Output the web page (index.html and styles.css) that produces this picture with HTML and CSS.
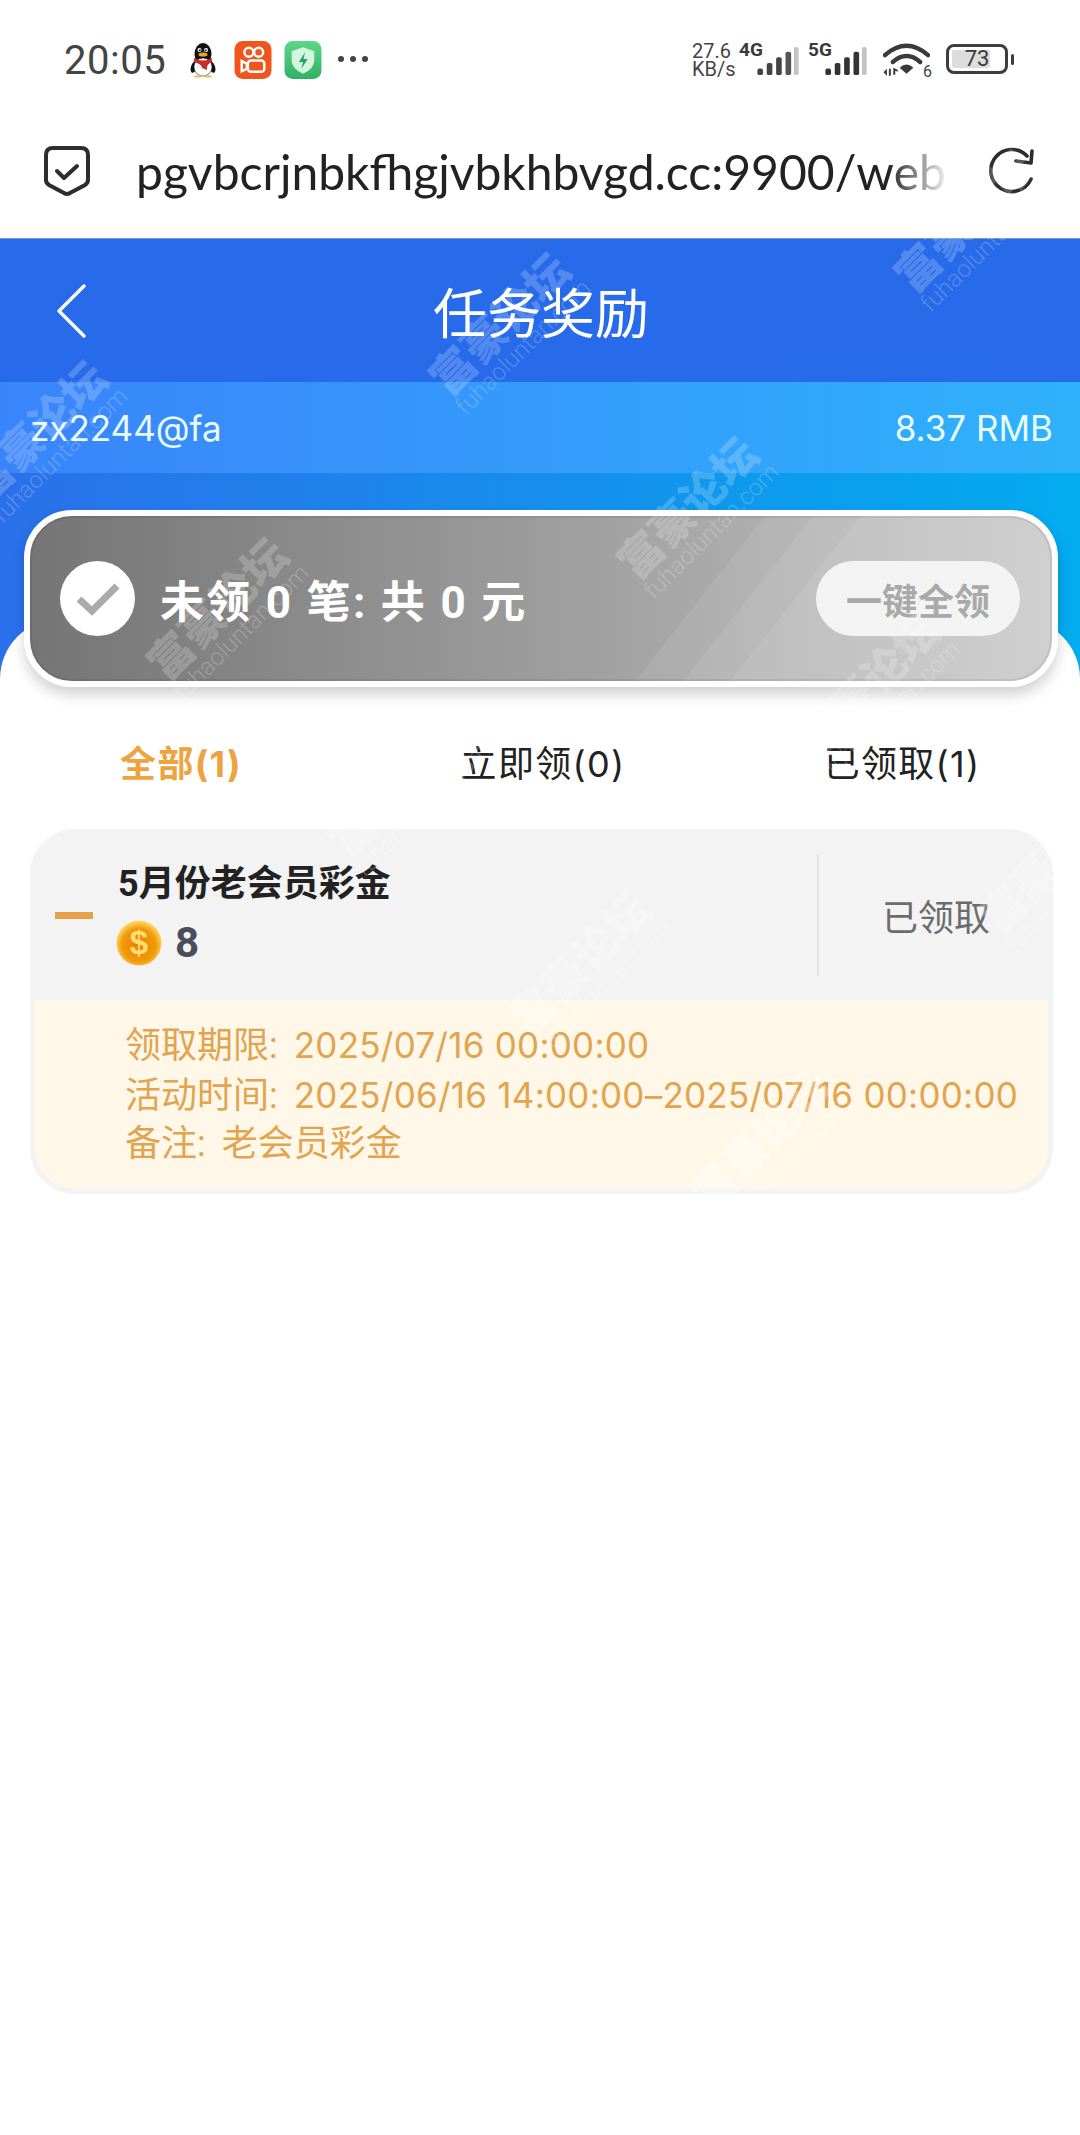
FILE: index.html
```html
<!DOCTYPE html>
<html lang="zh-CN">
  <head>
    <meta charset="UTF-8" />
    <meta name="viewport" content="width=device-width, initial-scale=1.0" />
    <title>任务奖励</title>
    <link rel="stylesheet" href="styles.css">
  </head>
  <body>
    <div class="status-bar">
      <div class="status-left">
        <span class="clock">20:05</span>
        <svg class="icon-qq" viewBox="0 0 28 36" width="28" height="36">
          <ellipse cx="14" cy="12" rx="8.5" ry="11" fill="#111" />
          <ellipse cx="5" cy="25" rx="3" ry="6" fill="#111" transform="rotate(20 5 25)" />
          <ellipse cx="23" cy="25" rx="3" ry="6" fill="#111" transform="rotate(-20 23 25)" />
          <ellipse cx="14" cy="25" rx="9" ry="9" fill="#fff" stroke="#222" stroke-width="0.6" />
          <path d="M5 16 Q14 21 23 16 L23 20 Q17 22 18 28 L13 26 Q13 22 5 20 Z" fill="#c9302c" />
          <circle cx="10.5" cy="8" r="2" fill="#fff" />
          <circle cx="17" cy="8" r="2" fill="#fff" />
          <circle cx="10.8" cy="8.2" r="1" fill="#111" />
          <circle cx="16.7" cy="8.2" r="1" fill="#111" />
          <ellipse cx="14" cy="12.5" rx="4.5" ry="2" fill="#e8a920" />
          <ellipse cx="9" cy="34.5" rx="4" ry="1.2" fill="#e8c56a" />
          <ellipse cx="19" cy="34.5" rx="4" ry="1.2" fill="#e8c56a" />
        </svg>
        <svg class="icon-app" viewBox="0 0 36 37" width="38" height="38">
          <rect width="36" height="37" rx="8" fill="#f0551c" />
          <g fill="none" stroke="#fff" stroke-width="2.4">
            <circle cx="14" cy="11" r="4.4" />
            <circle cx="23.5" cy="11" r="4.4" />
            <rect x="13" y="19" width="16" height="11" rx="3" />
            <path d="M12 22 L7 19.5 V29.5 L12 27 Z" />
          </g>
        </svg>
        <svg class="icon-app" viewBox="0 0 36 37" width="38" height="38">
          <defs>
            <linearGradient id="greenBg" x1="0" y1="0" x2="0" y2="1">
              <stop offset="0" stop-color="#5fd68a" />
              <stop offset="1" stop-color="#2fb264" />
            </linearGradient>
          </defs>
          <rect width="36" height="37" rx="8" fill="url(#greenBg)" />
          <path d="M18 6 L29 10 V19 Q29 27 18 32 Q7 27 7 19 V10 Z" fill="#d4f6df" />
          <path d="M20 11 L14 20.5 H18 L16.5 27 L22.5 17.5 H18.5 Z" fill="#26a45a" />
        </svg>
        <span class="dots"><i></i><i></i><i></i></span>
      </div>
      <div class="status-right">
        <div class="net-speed"><span>27.6</span><span>KB/s</span></div>
        <div class="sim sim-4g">
          <b>4G</b>
          <svg viewBox="0 0 46 32" width="46" height="30">
            <rect x="1" y="24" width="6" height="7" rx="2" fill="#444" />
            <rect x="11" y="18" width="6" height="13" rx="2" fill="#444" />
            <rect x="21" y="12" width="6" height="19" rx="2" fill="#444" />
            <rect x="31" y="6" width="6" height="25" rx="2" fill="#555" />
            <rect x="40" y="1" width="5" height="30" rx="2" fill="#c4c4c4" />
          </svg>
        </div>
        <div class="sim sim-5g">
          <b>5G</b>
          <svg viewBox="0 0 46 32" width="46" height="30">
            <rect x="1" y="24" width="6" height="7" rx="2" fill="#333" />
            <rect x="11" y="18" width="6" height="13" rx="2" fill="#333" />
            <rect x="21" y="12" width="6" height="19" rx="2" fill="#333" />
            <rect x="31" y="6" width="6" height="25" rx="2" fill="#333" />
            <rect x="40" y="1" width="5" height="30" rx="2" fill="#c4c4c4" />
          </svg>
        </div>
        <div class="wifi">
          <svg viewBox="0 0 48 36" width="47" height="36">
            <g fill="none" stroke="#3a3a3a" stroke-linecap="round">
              <path d="M2 13 Q24 -6 46 13" stroke-width="4.5" />
              <path d="M10 20 Q24 8 38 20" stroke-width="4.5" />
            </g>
            <path d="M17 26 Q24 19 31 26 L24 32 Z" fill="#3a3a3a" />
            <path d="M4 27 V34 L0.5 30.5 Z M6 27 H8 V34 H6 Z M10.5 26 V33 H12.5 V29 L15 30 V28 Z" fill="#3a3a3a" />
          </svg>
          <span class="wifi-six">6</span>
        </div>
        <div class="battery">
          <div class="battery-body"><span class="battery-level"></span><span class="battery-num">73</span></div>
          <span class="battery-nub"></span>
        </div>
      </div>
    </div>

    <div class="url-bar">
      <svg class="url-shield" viewBox="0 0 48 52" width="48" height="52">
        <path d="M10 3 H38 Q45 3 45 10 V35 Q45 38 42 40 L27 48 Q24 50 21 48 L6 40 Q3 38 3 35 V10 Q3 3 10 3 Z" fill="none" stroke="#2d2d2d" stroke-width="4" />
        <path d="M14 26 L21 33 L34 21" fill="none" stroke="#2d2d2d" stroke-width="4" stroke-linecap="round" stroke-linejoin="round" />
      </svg>
      <div class="url-text">pgvbcrjnbkfhgjvbkhbvgd.cc:9900/web</div>
      <svg class="url-reload" viewBox="0 0 50 50" width="50" height="50">
        <path d="M40 10 A21 21 0 1 0 44 33" fill="none" stroke="#2d2d2d" stroke-width="3.6" stroke-linecap="round" />
        <path d="M29 15 L44 17 L45 5" fill="none" stroke="#2d2d2d" stroke-width="3.6" stroke-linecap="round" stroke-linejoin="round" />
      </svg>
    </div>

    <header class="title-bar">
      <svg class="back-icon" viewBox="0 0 32 56" width="32" height="56">
        <path d="M29 3 L4 28 L29 53" fill="none" stroke="#fff" stroke-width="3.4" stroke-linecap="round" stroke-linejoin="round" />
      </svg>
      <h1>任务奖励</h1>
    </header>

    <div class="account-row">
      <span>zx2244@fa</span>
      <span>8.37 RMB</span>
    </div>

    <div class="hero">
      <div class="claim-card">
        <svg class="claim-stripes" viewBox="0 0 1022 165" preserveAspectRatio="none">
          <polygon points="605,165 735,0 1022,0 1022,165" fill="#fff" fill-opacity="0.08" />
          <polygon points="653,165 783,0 1022,0 1022,165" fill="#fff" fill-opacity="0.08" />
          <polygon points="700,165 830,0 1022,0 1022,165" fill="#fff" fill-opacity="0.08" />
        </svg>
        <div class="claim-left">
          <span class="claim-check">
            <svg viewBox="0 0 46 36" width="46" height="36">
              <path d="M4 18 L17 30 L42 5" fill="none" stroke="#ababab" stroke-width="7" />
            </svg>
          </span>
          <span class="claim-text">未领 0 笔: 共 0 元</span>
        </div>
        <button class="claim-btn">一键全领</button>
      </div>
    </div>

    <main class="sheet">
      <nav class="tabs">
        <span class="tab tab-active">全部(1)</span>
        <span class="tab">立即领(0)</span>
        <span class="tab">已领取(1)</span>
      </nav>

      <section class="task">
        <div class="task-head">
          <span class="task-minus"></span>
          <div class="task-info">
            <div class="task-name">5月份老会员彩金</div>
            <div class="task-amount">
              <svg viewBox="0 0 46 46" width="46" height="46">
                <defs>
                  <radialGradient id="coin" cx="0.5" cy="0.55" r="0.55">
                    <stop offset="0" stop-color="#ee7f00" />
                    <stop offset="0.68" stop-color="#f09a0c" />
                    <stop offset="1" stop-color="#ffe06a" />
                  </radialGradient>
                </defs>
                <circle cx="23" cy="23" r="22.5" fill="url(#coin)" />
                <text class="coin-sign" x="23" y="34" text-anchor="middle">$</text>
              </svg>
              <span>8</span>
            </div>
          </div>
          <span class="task-status">已领取</span>
        </div>
        <div class="task-detail">
          <p><span class="detail-label">领取期限:</span><span class="detail-value">2025/07/16 00:00:00</span></p>
          <p><span class="detail-label">活动时间:</span><span class="detail-value">2025/06/16 14:00:00–2025/07/16 00:00:00</span></p>
          <p><span class="detail-label">备注:</span>老会员彩金</p>
        </div>
      </section>
    </main>

    <!-- forum watermark, repeats over the whole page -->
    <div class="wm wm-1"><b>富豪论坛</b><small>fuhaoluntan.com</small></div>
    <div class="wm wm-2"><b>富豪论坛</b><small>fuhaoluntan.com</small></div>
    <div class="wm wm-3"><b>富豪论坛</b><small>fuhaoluntan.com</small></div>
    <div class="wm wm-4"><b>富豪论坛</b><small>fuhaoluntan.com</small></div>
    <div class="wm wm-5"><b>富豪论坛</b><small>fuhaoluntan.com</small></div>
    <div class="wm wm-6"><b>富豪论坛</b><small>fuhaoluntan.com</small></div>
    <div class="wm wm-7 wm-faint"><b>富豪论坛</b><small>fuhaoluntan.com</small></div>
    <div class="wm wm-8 wm-faint"><b>富豪论坛</b><small>fuhaoluntan.com</small></div>
    <div class="wm wm-9 wm-faint"><b>富豪论坛</b><small>fuhaoluntan.com</small></div>
    <div class="wm wm-10 wm-faint"><b>富豪论坛</b><small>fuhaoluntan.com</small></div>
  </body>
</html>
```

FILE: styles.css
```css
html,
body {
  margin: 0;
  padding: 0;
}
body {
  position: relative;
  width: 1080px;
  height: 2135px;
  overflow: hidden;
  background: #fff;
  font-family: "Roboto", "Noto Sans CJK SC", sans-serif;
  color: #222;
}

/* status bar */
.status-bar {
  height: 100px;
  display: flex;
  justify-content: space-between;
  align-items: flex-start;
  padding: 0 66px 0 64px;
  box-sizing: border-box;
  color: #444;
}
.status-left {
  display: flex;
  align-items: center;
  height: 120px;
}
.clock {
  font-size: 40px;
  width: 125px;
  letter-spacing: 0.5px;
}
.icon-qq {
  margin-right: 17px;
}
.icon-app {
  margin-right: 12px;
}
.dots {
  display: flex;
  gap: 6px;
  margin-left: 4px;
  margin-top: -2px;
}
.dots i {
  width: 6px;
  height: 6px;
  border-radius: 50%;
  background: #444;
}
.status-right {
  display: flex;
  align-items: flex-start;
  padding-top: 42px;
}
.net-speed {
  width: 47px;
  display: flex;
  flex-direction: column;
  font-size: 20px;
  line-height: 18px;
}
.sim {
  position: relative;
  height: 34px;
}
.sim b {
  font-size: 19px;
  line-height: 16px;
  display: block;
  color: #3a3a3a;
}
.sim svg {
  position: absolute;
  right: 0;
  top: 4px;
}
.sim-4g {
  width: 62px;
  margin-right: 7px;
}
.sim-5g {
  width: 61px;
  margin-right: 14px;
}
.wifi {
  position: relative;
  width: 47px;
  margin-right: 16px;
}
.wifi svg {
  display: block;
}
.wifi-six {
  position: absolute;
  right: -2px;
  bottom: -2px;
  font-size: 16px;
  line-height: 16px;
  color: #444;
}
.battery {
  display: flex;
  align-items: center;
  margin-top: 2px;
}
.battery-body {
  position: relative;
  width: 62px;
  height: 30px;
  border: 3px solid #3d3d3d;
  border-radius: 8px;
  box-sizing: border-box;
  padding: 3px;
  font-size: 22px;
  text-align: center;
  line-height: 24px;
  color: #3a3a3a;
}
.battery-level {
  position: absolute;
  left: 3px;
  top: 3px;
  bottom: 3px;
  width: 38px;
  background: #ddd;
  border-radius: 2px;
}
.battery-num {
  position: relative;
  display: block;
  margin-top: -3px;
}
.battery-nub {
  width: 3px;
  height: 11px;
  margin-left: 3px;
  background: #3d3d3d;
  border-radius: 2px;
}

/* url bar */
.url-bar {
  height: 139px;
  display: flex;
  align-items: center;
  padding: 4px 0 0 43px;
  box-sizing: border-box;
  border-bottom: 1px solid #6e96c8;
}
.url-text {
  width: 808px;
  margin-left: 45px;
  font-family: "Lato", "Noto Sans", sans-serif;
  font-size: 48px;
  color: #222;
  white-space: nowrap;
  overflow: hidden;
  -webkit-mask-image: linear-gradient(90deg, #000 93%, rgba(0, 0, 0, 0.1));
  mask-image: linear-gradient(90deg, #000 93%, rgba(0, 0, 0, 0.1));
}
.url-reload {
  margin-left: 43px;
}

/* blue header */
.title-bar {
  position: relative;
  height: 143px;
  padding-left: 2px;
  background: #276bea;
  display: flex;
  align-items: center;
  justify-content: center;
}
.title-bar h1 {
  margin: 0;
  font-size: 54px;
  font-weight: 400;
  color: #fff;
}
.back-icon {
  position: absolute;
  left: 55px;
  top: 44px;
}
.account-row {
  height: 91px;
  display: flex;
  align-items: center;
  justify-content: space-between;
  padding: 0 27px 0 30px;
  background: linear-gradient(90deg, #3a84fb, #2fb2fb);
  color: #e8fbff;
  font-family: "Inter", "Roboto", sans-serif;
  font-size: 35px;
}

/* claim card sits across the blue block and the white sheet */
.hero {
  position: relative;
  height: 146px;
  padding: 37px 22px 0 24px;
  box-sizing: border-box;
}
.hero::before {
  content: "";
  position: absolute;
  left: 0;
  right: 0;
  top: 0;
  height: 210px;
  background: linear-gradient(90deg, #2b70ea, #02acef);
}
.claim-card {
  position: relative;
  z-index: 2;
  height: 177px;
  box-sizing: border-box;
  display: flex;
  align-items: center;
  justify-content: space-between;
  padding: 0 32px 0 30px;
  border: 6px solid #fff;
  border-radius: 48px;
  background: linear-gradient(90deg, #757575, #c4c4c4);
  box-shadow: 0 8px 14px rgba(0, 0, 0, 0.18);
}
.claim-card::after {
  content: "";
  position: absolute;
  inset: 0;
  border-radius: 42px;
  box-shadow: inset 0 0 0 2px rgba(0, 0, 0, 0.07);
}
.claim-stripes {
  position: absolute;
  left: 0;
  top: 0;
  width: 100%;
  height: 100%;
  border-radius: 42px;
}
.claim-left {
  position: relative;
  z-index: 1;
  display: flex;
  align-items: center;
}
.claim-check {
  width: 75px;
  height: 75px;
  border-radius: 50%;
  background: #fff;
  display: flex;
  align-items: center;
  justify-content: center;
  margin-right: 25px;
}
.claim-text {
  font-size: 44px;
  font-weight: 700;
  color: #fff;
  letter-spacing: 2.3px;
}
.claim-btn {
  position: relative;
  z-index: 1;
  width: 204px;
  height: 75px;
  border: 0;
  border-radius: 38px;
  background: #f3f3f3;
  color: #a9a9a9;
  font-family: inherit;
  font-size: 36px;
  font-weight: 700;
  padding: 0;
}

/* white sheet */
.sheet {
  position: relative;
  z-index: 1;
  height: 1515px;
  background: #fff;
  border-radius: 60px 60px 0 0;
}
.tabs {
  display: grid;
  grid-template-columns: 362px 362px 1fr;
  height: 210px;
  padding-top: 121px;
  box-sizing: border-box;
}
.tab {
  text-align: center;
  font-family: "Inter", "Noto Sans CJK SC", sans-serif;
  font-size: 36px;
  line-height: 48px;
  letter-spacing: 1.3px;
  color: #222;
}
.tab-active {
  color: #eea33f;
  font-weight: 700;
}
.task {
  margin: 0 27px 0 30px;
  padding: 0 5px 5px;
  background: #f3f3f4;
  border-radius: 45px;
}
.task-head {
  height: 171px;
  display: flex;
  align-items: center;
  margin: 0 -5px;
  padding-left: 25px;
}
.task-minus {
  width: 38px;
  height: 7px;
  background: #e9a04b;
  margin-right: 25px;
  margin-top: 1px;
}
.task-info {
  width: 699px;
  height: 122px;
  border-right: 2px solid #e2e2e4;
}
.task-name {
  font-size: 36px;
  font-weight: 700;
  line-height: 48px;
  color: #222;
  margin-top: 6px;
}
.task-amount {
  display: flex;
  align-items: center;
  gap: 13px;
  margin-top: 12px;
  margin-left: -2px;
  font-size: 42px;
  font-weight: 700;
  line-height: 46px;
  color: #4a4e5a;
}
.coin-sign {
  font-family: "Liberation Sans", sans-serif;
  font-size: 33px;
  font-weight: 700;
  fill: #ffdf70;
}
.task-status {
  flex: 1;
  text-align: center;
  font-size: 36px;
  color: #6c6c6c;
}
.task-detail {
  height: 189px;
  box-sizing: border-box;
  padding: 21px 0 0 90px;
  background: #fff8e9;
  border-radius: 0 0 40px 40px;
  color: #e3a450;
  font-size: 36px;
  line-height: 48.5px;
}
.task-detail p {
  margin: 0;
  white-space: nowrap;
}
.detail-label {
  margin-right: 16px;
}
.detail-value {
  font-family: "Inter", "Roboto", sans-serif;
  font-size: 35px;
  letter-spacing: 0.25px;
}

/* watermark */
.wm {
  position: absolute;
  z-index: 3;
  width: 320px;
  text-align: center;
  transform: rotate(-45deg);
  color: #fff;
  opacity: 0.2;
  pointer-events: none;
}
.wm-faint {
  opacity: 0.25;
}
.wm b {
  display: block;
  font-family: "Noto Sans CJK SC", sans-serif;
  font-size: 44px;
  line-height: 46px;
  font-weight: 900;
}
.wm small {
  display: block;
  font-family: "Roboto", sans-serif;
  font-size: 24px;
  line-height: 26px;
  font-weight: 300;
}
.wm-1 { left: 812px; top: 192px; }
.wm-2 { left: 347px; top: 295px; }
.wm-3 { left: -116px; top: 403px; }
.wm-4 { left: 535px; top: 479px; }
.wm-5 { left: 65px; top: 580px; }
.wm-6 { left: 716px; top: 656px; }
.wm-7 { left: 246px; top: 757px; }
.wm-8 { left: 897px; top: 833px; }
.wm-9 { left: 427px; top: 934px; }
.wm-10 { left: 608px; top: 1111px; }
```
